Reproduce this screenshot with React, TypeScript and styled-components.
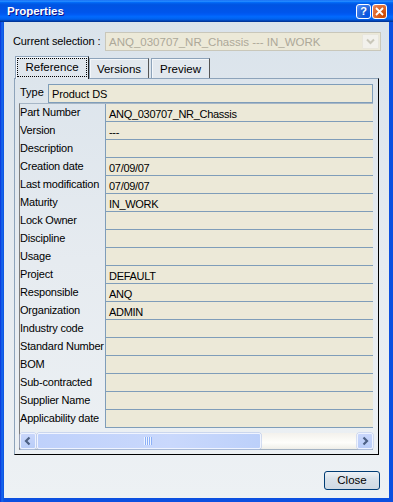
import styled, { createGlobalStyle } from "styled-components";

const GlobalStyle = createGlobalStyle`
  html, body {
    margin: 0;
    padding: 0;
    background: #0842d8;
  }
  body {
    font-family: "Liberation Sans", Arial, sans-serif;
    font-size: 11px;
    color: #000;
  }
  * {
    box-sizing: border-box;
  }
`;

const Window = styled.div`
  width: 393px;
  height: 502px;
  display: flex;
  flex-direction: column;
  overflow: hidden;
`;

const TitleBar = styled.div`
  height: 22px;
  flex: none;
  display: flex;
  align-items: center;
  padding: 0 6px 0 7px;
  background: linear-gradient(
    to bottom,
    #0058ee 0%,
    #3593ff 4%,
    #288eff 6%,
    #127dff 8%,
    #036ffc 10%,
    #0262ee 14%,
    #0057e5 20%,
    #0054e3 24%,
    #0055eb 56%,
    #005bf5 66%,
    #026afe 76%,
    #0062ef 86%,
    #0052d6 92%,
    #0040ab 94%,
    #003092 100%
  );
`;

const Title = styled.div`
  flex: 1;
  color: #fff;
  font-weight: bold;
  font-size: 11.5px;
  padding-bottom: 1px;
  text-shadow: 1px 1px #0f1089;
`;

const CaptionButton = styled.div<{ $kind: "help" | "close" }>`
  width: 15px;
  height: 15px;
  margin-left: 1px;
  border: 1px solid #fff;
  border-radius: 3px;
  display: flex;
  align-items: center;
  justify-content: center;
  color: #fff;
  font-weight: bold;
  font-size: 11px;
  background: ${(p) =>
    p.$kind === "help"
      ? "radial-gradient(circle at 80% 80%, #0054e9 0%, #2263d5 45%, #4483f5 80%, #6ea2fe 100%)"
      : "radial-gradient(circle at 80% 80%, #cc4600 0%, #dc6527 50%, #e5784a 80%, #f0a184 100%)"};
`;

const Frame = styled.div`
  flex: 1;
  display: flex;
  padding: 0 4px 4px 4px;
  background: linear-gradient(to right, #0831d9, #166aee 2px, #0b4fe0 4px);
`;

const Body = styled.div`
  flex: 1;
  display: flex;
  flex-direction: column;
  padding: 10px 8px 0 9px;
  background: linear-gradient(to bottom, #dae3eb, #e6ebf0 50%, #edf1f4);
`;

const SelectionRow = styled.div`
  display: flex;
  align-items: center;
  height: 19px;
`;

const SelectionLabel = styled.div`
  width: 92px;
  padding-bottom: 2px;
  letter-spacing: -0.1px;
`;

const Combo = styled.div`
  flex: 1;
  height: 19px;
  display: flex;
  align-items: center;
  border: 1px solid #c9c7ba;
  background: #ece9d8;
  padding: 0 1px 0 3px;
`;

const ComboText = styled.div`
  flex: 1;
  color: #aca899;
  font-size: 11.5px;
`;

const ComboButton = styled.div`
  width: 17px;
  height: 15px;
  border: 1px solid #e8e6dc;
  border-radius: 1px;
  background: #f2f1ec;
  display: flex;
  align-items: center;
  justify-content: center;
`;

const TabArea = styled.div`
  display: flex;
  flex-direction: column;
  margin: 5px 2px 0 1px;
`;

const TabRow = styled.div`
  display: flex;
  align-items: flex-end;
  height: 23px;
  margin-bottom: -1px;
  padding-left: 1px;
  position: relative;
  z-index: 1;
`;

const Tab = styled.div<{ $active?: boolean; $width: number }>`
  width: ${(p) => p.$width}px;
  height: ${(p) => (p.$active ? 23 : 20)}px;
  margin-bottom: ${(p) => (p.$active ? 0 : 1)}px;
  margin-right: ${(p) => (p.$active ? 0 : 2)}px;
  display: flex;
  align-items: center;
  justify-content: center;
  font-size: 11.5px;
  border-top: 1px solid #8da3ba;
  border-left: 1px solid #8da3ba;
  border-right: 1px solid ${(p) => (p.$active ? "#222" : "#555")};
  background: ${(p) => (p.$active ? "#dfe6ed" : "#e2e8ee")};
  padding: ${(p) => (p.$active ? "1px 1px 2px" : "0")};
  box-shadow: inset 1px 1px 0 #f4f7fa;
`;

const FocusRect = styled.div`
  width: 100%;
  height: 100%;
  border: 1px dotted #000;
  display: flex;
  align-items: center;
  justify-content: center;
  padding-bottom: 1px;
`;

const Panel = styled.div`
  height: 377px;
  display: flex;
  flex-direction: column;
  padding: 5px 5px 4px 4px;
  border-top: 1px solid #8da3ba;
  border-left: 1px solid #8da3ba;
  border-right: 1px solid #000;
  border-bottom: 1px solid #000;
`;

const TypeRow = styled.div`
  display: flex;
  height: 19px;
`;

const TypeLabel = styled.div`
  width: 29px;
  padding: 2px 0 0 1px;
`;

const Field = styled.div`
  flex: 1;
  border: 1px solid #7f9db9;
  background: #ece9d8;
  padding: 3px 0 0 3px;
  letter-spacing: -0.1px;
`;

const Grid = styled.div`
  display: flex;
  flex-direction: column;
  border-top: 1px solid #a6b6c6;
  border-left: 1px solid #7b7b7b;
  border-bottom: 1px solid #a3b2c2;
`;

const Row = styled.div`
  display: flex;
  height: 18px;
`;

const Label = styled.div`
  width: 85px;
  padding-top: 2px;
  white-space: nowrap;
  overflow: hidden;
  letter-spacing: -0.2px;
`;

const Value = styled.div`
  flex: 1;
  background: #ece9d8;
  border-left: 1px solid #7f9db9;
  border-bottom: 1px solid #7f9db9;
  padding: 4px 0 0 3px;
  white-space: nowrap;
  letter-spacing: -0.3px;
`;

const ScrollBar = styled.div`
  display: flex;
  height: 16px;
  margin-top: 5px;
  background: linear-gradient(to bottom, #f3f1ec, #fefefb 60%, #efeee8);
`;

const ArrowButton = styled.div`
  width: 16px;
  height: 16px;
  border: 1px solid #eef3ff;
  border-radius: 2px;
  background: linear-gradient(to bottom, #c8d6fb, #b9cdf8);
  box-shadow: 0 0 0 0.5px #b4c6ef;
  display: flex;
  align-items: center;
  justify-content: center;
`;

const Thumb = styled.div`
  width: 224px;
  margin-left: 1px;
  border: 1px solid #f0f4ff;
  border-radius: 2px;
  background: linear-gradient(to right, #bfd1fb, #c9d8fc 60%, #bcd0fa);
  box-shadow: 0 0 0 0.5px #a9bde9;
  display: flex;
  align-items: center;
  justify-content: center;
  padding-right: 3px;
`;

const TrackGap = styled.div`
  flex: 1;
`;

const Footer = styled.div`
  display: flex;
  justify-content: flex-end;
  margin-top: 16px;
  padding-right: 1px;
`;

const Button = styled.div`
  width: 56px;
  height: 19px;
  border: 1px solid #003c74;
  border-radius: 3px;
  background: linear-gradient(to bottom, #eef2f6, #d9e2ea 40%, #cfd9e3);
  display: flex;
  align-items: center;
  justify-content: center;
  font-size: 11.5px;
  padding-bottom: 1px;
`;

const rows: [string, string][] = [
  ["Part Number", "ANQ_030707_NR_Chassis"],
  ["Version", "---"],
  ["Description", ""],
  ["Creation date", "07/09/07"],
  ["Last modification", "07/09/07"],
  ["Maturity", "IN_WORK"],
  ["Lock Owner", ""],
  ["Discipline", ""],
  ["Usage", ""],
  ["Project", "DEFAULT"],
  ["Responsible", "ANQ"],
  ["Organization", "ADMIN"],
  ["Industry code", ""],
  ["Standard Number", ""],
  ["BOM", ""],
  ["Sub-contracted", ""],
  ["Supplier Name", ""],
  ["Applicability date", ""],
];

function Chevron({ dir }: { dir: "left" | "right" }) {
  const pts = dir === "left" ? "8.5,3.5 5,7 8.5,10.5" : "5.5,3.5 9,7 5.5,10.5";
  return (
    <svg width="14" height="14" viewBox="0 0 14 14">
      <polyline points={pts} fill="none" stroke="#4d6185" strokeWidth="2.2" />
    </svg>
  );
}

function Grip() {
  return (
    <svg width="8" height="8" viewBox="0 0 8 8">
      {[0, 2, 4, 6].map((x) => (
        <g key={x}>
          <rect x={x} y="0" width="1" height="8" fill="#eef4ff" />
          <rect x={x + 1} y="0" width="1" height="8" fill="#8cb0f8" />
        </g>
      ))}
    </svg>
  );
}

export default function App() {
  return (
    <>
      <GlobalStyle />
      <Window>
        <TitleBar>
          <Title>Properties</Title>
          <CaptionButton $kind="help">?</CaptionButton>
          <CaptionButton $kind="close">
            <svg width="9" height="9" viewBox="0 0 9 9">
              <path d="M1 1 L8 8 M8 1 L1 8" stroke="#fff" strokeWidth="1.8" />
            </svg>
          </CaptionButton>
        </TitleBar>
        <Frame>
          <Body>
            <SelectionRow>
              <SelectionLabel>Current selection :</SelectionLabel>
              <Combo>
                <ComboText>ANQ_030707_NR_Chassis --- IN_WORK</ComboText>
                <ComboButton>
                  <svg width="9" height="7" viewBox="0 0 9 7">
                    <polyline
                      points="1,1.5 4.5,5 8,1.5"
                      fill="none"
                      stroke="#c9c7ba"
                      strokeWidth="2"
                    />
                  </svg>
                </ComboButton>
              </Combo>
            </SelectionRow>

            <TabArea>
              <TabRow>
                <Tab $active $width={74}>
                  <FocusRect>Reference</FocusRect>
                </Tab>
                <Tab $width={60}>Versions</Tab>
                <Tab $width={59}>Preview</Tab>
              </TabRow>
              <Panel>
                <TypeRow>
                  <TypeLabel>Type</TypeLabel>
                  <Field>Product DS</Field>
                </TypeRow>
                <Grid>
                  {rows.map(([label, value]) => (
                    <Row key={label}>
                      <Label>{label}</Label>
                      <Value>{value}</Value>
                    </Row>
                  ))}
                  <ScrollBar>
                    <ArrowButton>
                      <Chevron dir="left" />
                    </ArrowButton>
                    <Thumb>
                      <Grip />
                    </Thumb>
                    <TrackGap />
                    <ArrowButton>
                      <Chevron dir="right" />
                    </ArrowButton>
                  </ScrollBar>
                </Grid>
              </Panel>
            </TabArea>

            <Footer>
              <Button>Close</Button>
            </Footer>
          </Body>
        </Frame>
      </Window>
    </>
  );
}
